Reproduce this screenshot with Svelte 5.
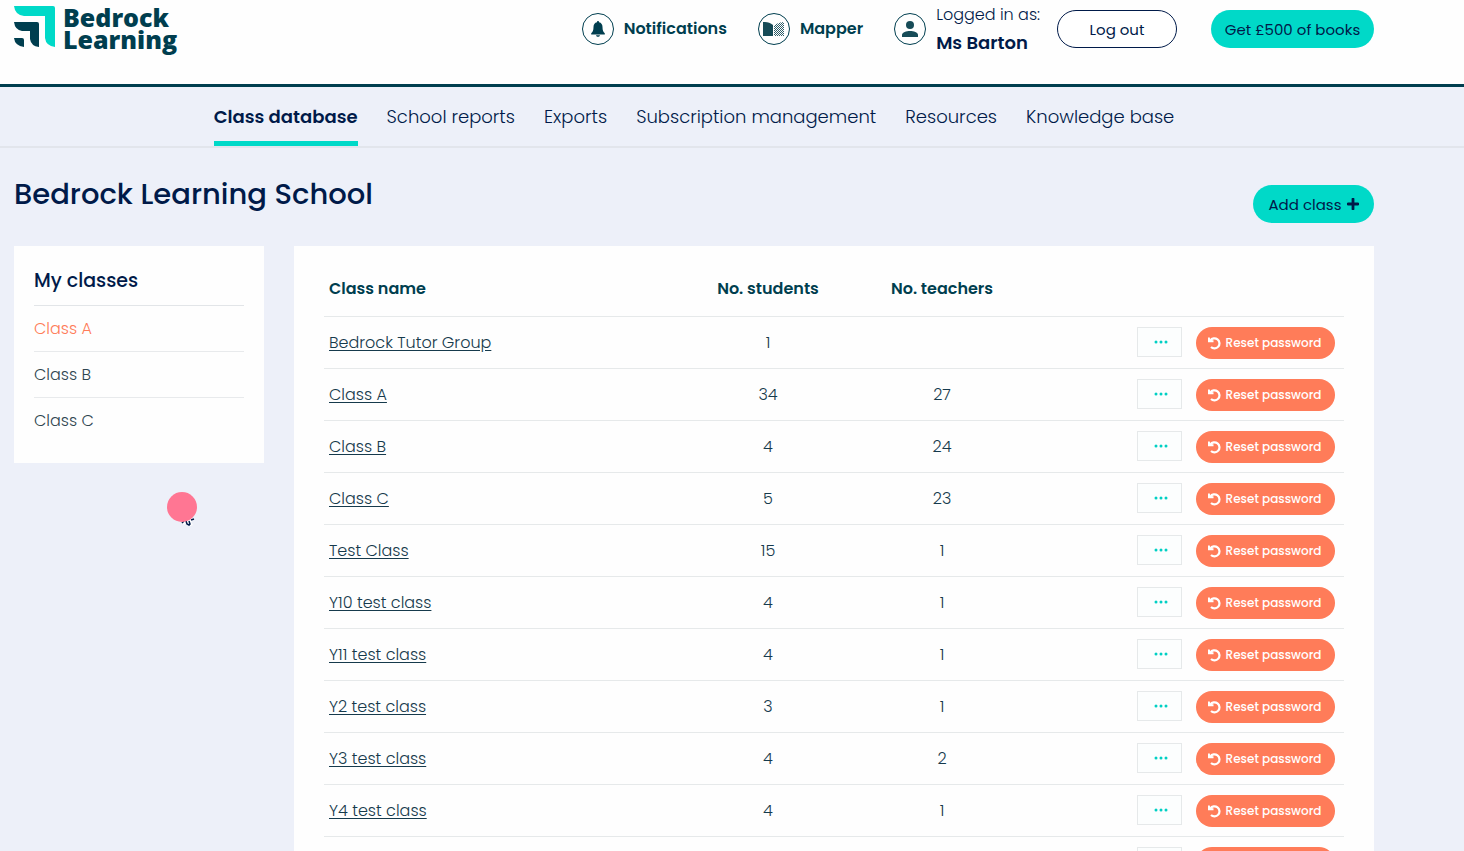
<script lang="ts">
    interface SchoolClass {
        name: string;
        students: number;
        teachers: number | null;
    }

    const tabs = [
        "Class database",
        "School reports",
        "Exports",
        "Subscription management",
        "Resources",
        "Knowledge base",
    ];

    const myClasses = ["Class A", "Class B", "Class C"];

    const classes: SchoolClass[] = [
        { name: "Bedrock Tutor Group", students: 1, teachers: null },
        { name: "Class A", students: 34, teachers: 27 },
        { name: "Class B", students: 4, teachers: 24 },
        { name: "Class C", students: 5, teachers: 23 },
        { name: "Test Class", students: 15, teachers: 1 },
        { name: "Y10 test class", students: 4, teachers: 1 },
        { name: "Y11 test class", students: 4, teachers: 1 },
        { name: "Y2 test class", students: 3, teachers: 1 },
        { name: "Y3 test class", students: 4, teachers: 2 },
        { name: "Y4 test class", students: 4, teachers: 1 },
        { name: "Y5 test class", students: 4, teachers: 1 },
    ];

    let activeTab = $state("Class database");
    let activeClass = $state("Class A");
</script>

<div class="page">
    <header class="topbar">
        <a class="logo" href="#home" aria-label="Bedrock Learning">
            <svg width="42" height="42" viewBox="0 0 42 42" aria-hidden="true">
                <path d="M0 0h39q2 0 2 2v39q-9-1-10-9V10H10Q1 9 0 0z" fill="#00d9c8" />
                <path d="M0 16h23q2 0 2 2v23q-8-1-9-8v-8H8q-7-1-8-9z" fill="#003e4f" />
                <path d="M0 32h8q2 0 2 2v7Q1 40 0 32z" fill="#003e4f" />
            </svg>
            <span class="logo-text">Bedrock<br />Learning</span>
        </a>

        <div class="account">
            <a class="top-link" href="#notifications">
                <span class="circle">
                    <svg width="14" height="16" viewBox="0 0 14 16" aria-hidden="true">
                        <path
                            d="M7 0c.7 0 1 .5 1 1.200C10.400 1.700 11.500 3.500 11.500 6c0 3.500.8 4.800 2.300 6.200v1.300H.2v-1.300C1.700 10.800 2.500 9.500 2.500 6c0-2.500 1.100-4.300 3.500-4.800C6 .5 6.300 0 7 0zM5 14.300h4c-.3 1-1 1.500-2 1.500s-1.700-.5-2-1.500z"
                            fill="#003e4f"
                        />
                    </svg>
                </span>
                Notifications
            </a>

            <a class="top-link" href="#mapper">
                <span class="circle">
                    <svg width="22" height="16" viewBox="0 0 22 16" aria-hidden="true">
                        <defs>
                            <pattern id="hatch" width="2" height="2" patternUnits="userSpaceOnUse">
                                <path d="M-.5-.5l3 3M-.5 1.500l1 1M1.500-.5l1 1" stroke="#164b57" stroke-width=".9" />
                            </pattern>
                        </defs>
                        <path d="M0 1c4-.5 7 .5 10 3v11H0z" fill="#164b57" />
                        <path d="M11 5c3-3 6-4 10-4v14H11z" fill="url(#hatch)" />
                    </svg>
                </span>
                Mapper
            </a>

            <div class="user">
                <span class="circle">
                    <svg width="16" height="16" viewBox="0 0 16 16" aria-hidden="true">
                        <circle cx="8" cy="4" r="4" fill="#164b57" />
                        <path d="M0 16v-2c0-2.700 4.500-4 8-4s8 1.300 8 4v2z" fill="#164b57" />
                    </svg>
                </span>
                <div class="user-text">
                    <span>Logged in as:</span>
                    <strong>Ms Barton</strong>
                </div>
            </div>

            <button class="pill logout" type="button">Log out</button>
            <button class="pill books" type="button">Get £500 of books</button>
        </div>
    </header>

    <nav class="tabs">
        {#each tabs as tab}
            <a
                href="#{tab.toLowerCase().replaceAll(' ', '-')}"
                class:active={tab === activeTab}
                onclick={() => (activeTab = tab)}>{tab}</a
            >
        {/each}
    </nav>

    <main>
        <div class="title-row">
            <h1>Bedrock Learning School</h1>
            <button class="pill add" type="button">
                Add class
                <svg width="12" height="12" viewBox="0 0 12 12" aria-hidden="true">
                    <path d="M6 1v10M1 6h10" stroke="#001a49" stroke-width="2.800" stroke-linecap="round" />
                </svg>
            </button>
        </div>

        <div class="columns">
            <aside class="panel side">
                <h2>My classes</h2>
                <ul>
                    {#each myClasses as name}
                        <li>
                            <a
                                href="#{name.toLowerCase().replace(' ', '-')}"
                                class:active={name === activeClass}
                                onclick={() => (activeClass = name)}>{name}</a
                            >
                        </li>
                    {/each}
                </ul>
            </aside>

            <section class="panel list">
                <table>
                    <thead>
                        <tr>
                            <th class="name">Class name</th>
                            <th class="count">No. students</th>
                            <th class="count">No. teachers</th>
                            <th class="actions-col" aria-label="Actions"></th>
                        </tr>
                    </thead>
                    <tbody>
                        {#each classes as item}
                            <tr>
                                <td class="name"><a href="#class">{item.name}</a></td>
                                <td class="count">{item.students}</td>
                                <td class="count">{item.teachers ?? ""}</td>
                                <td>
                                    <div class="actions">
                                        <button class="more" type="button" aria-label="More options">
                                            <svg width="14" height="4" viewBox="0 0 14 4" aria-hidden="true">
                                                <circle cx="2" cy="2" r="1.500" />
                                                <circle cx="7" cy="2" r="1.500" />
                                                <circle cx="12" cy="2" r="1.500" />
                                            </svg>
                                        </button>
                                        <button class="reset" type="button">
                                            <svg width="13" height="13" viewBox="0 0 13 13" aria-hidden="true">
                                                <path
                                                    d="M2.300 3.600A5 5 0 1 1 3 10"
                                                    fill="none"
                                                    stroke="#fff"
                                                    stroke-width="2.200"
                                                />
                                                <path d="M0 .4h1.800l.4 2.600 3.300.2v2H0z" fill="#fff" />
                                            </svg>
                                            Reset password
                                        </button>
                                    </div>
                                </td>
                            </tr>
                        {/each}
                    </tbody>
                </table>
            </section>
        </div>
    </main>

    <!-- click highlight with the pointer tip under it -->
    <div class="pointer" aria-hidden="true">
        <svg width="30" height="36" viewBox="0 0 30 36">
            <path d="M15 30l3-3 6 0 3 0-3 3 2 3-3 1-3-4-3 3z" fill="#fff" />
            <path
                d="M15 31l2-2M19 29l1 3 2 1 1-1-1-3M24 28l3-1"
                fill="none"
                stroke="#001a49"
                stroke-width="1.500"
            />
            <circle cx="15" cy="15" r="15" fill="#ff7693" />
        </svg>
    </div>
</div>

<style>
    :global(body) {
        margin: 0;
        background: #edf0f9;
    }

    .page {
        position: relative;
        height: 100vh;
        overflow: hidden;
        background: #edf0f9;
        color: #001a49;
        font-family: Poppins, Inter, "Open Sans", sans-serif;
        font-size: 16px;
        font-weight: 300;
        line-height: 24px;
    }

    a {
        color: inherit;
        text-decoration: none;
    }

    button {
        font-family: inherit;
        color: inherit;
        cursor: pointer;
    }

    .topbar {
        display: flex;
        justify-content: space-between;
        align-items: flex-start;
        box-sizing: border-box;
        height: 87px;
        padding: 0 90px 0 14px;
        background: #fefefe;
        border-bottom: 3px solid #003e4f;
    }

    .logo {
        display: flex;
        gap: 7px;
        padding-top: 6px;
        color: #003e4f;
    }

    .logo-text {
        font-family: "Open Sans", "Noto Sans", sans-serif;
        font-size: 25px;
        font-weight: 800;
        line-height: 22px;
    }

    .account {
        display: flex;
        align-items: center;
        height: 58px;
    }

    .top-link {
        display: flex;
        align-items: center;
        gap: 10px;
        margin-right: 31px;
        color: #003e4f;
        font-weight: 600;
    }

    .circle {
        display: flex;
        align-items: center;
        justify-content: center;
        box-sizing: border-box;
        width: 32px;
        height: 32px;
        border: 1px solid #003e4f;
        border-radius: 50%;
    }

    .user {
        display: flex;
        align-items: center;
        gap: 10px;
        margin-right: 17px;
    }

    .user-text {
        display: flex;
        flex-direction: column;
        line-height: 28px;
    }

    .user-text strong {
        font-size: 18px;
        font-weight: 600;
    }

    .pill {
        display: flex;
        align-items: center;
        justify-content: center;
        gap: 5px;
        height: 38px;
        padding: 0 16px;
        border: 0;
        border-radius: 19px;
        background: #00d9c8;
        font-size: 15px;
        font-weight: 400;
    }

    .logout {
        width: 120px;
        margin-right: 34px;
        border: 1px solid #001a49;
        background: #fff;
    }

    .books {
        width: 163px;
        padding: 0;
    }

    .add {
        width: 121px;
        padding: 0;
    }

    .tabs {
        display: flex;
        justify-content: center;
        gap: 29px;
        padding: 0 90px 0 14px;
        border-bottom: 2px solid #e2e5ec;
        font-size: 18px;
    }

    .tabs a {
        padding: 18px 0 12px;
        border-bottom: 5px solid transparent;
    }

    .tabs a.active {
        border-bottom-color: #00d9c8;
        font-weight: 600;
    }

    main {
        padding: 25px 90px 0 14px;
    }

    .title-row {
        display: flex;
        justify-content: space-between;
        align-items: flex-start;
        height: 73px;
    }

    h1 {
        margin: 0;
        font-size: 29px;
        font-weight: 500;
        line-height: 42px;
    }

    .title-row .pill {
        margin-top: 12px;
    }

    .columns {
        display: grid;
        grid-template-columns: 250px 1fr;
        gap: 30px;
        align-items: start;
    }

    .panel {
        background: #fefefe;
    }

    .side {
        padding: 20px;
    }

    h2 {
        margin: 0;
        padding: 3px 0 12px;
        font-size: 19px;
        font-weight: 500;
        border-bottom: 1px solid #e2e5e8;
    }

    ul {
        margin: 0;
        padding: 0;
        list-style: none;
    }

    li {
        padding: 11px 0 10px;
        border-bottom: 1px solid #e8eaec;
        color: #2f4550;
    }

    li:last-child {
        border-bottom: 0;
    }

    li a.active {
        color: #ff7c59;
    }

    .list {
        padding: 15px 30px;
    }

    table {
        width: 100%;
        table-layout: fixed;
        border-collapse: collapse;
        color: #163a4c;
    }

    th,
    td {
        box-sizing: border-box;
        height: 52px;
        padding: 2px 5px 0;
        border-bottom: 1px solid #e6e9ea;
        text-align: center;
    }

    th {
        height: 55px;
        color: #003e4f;
        font-weight: 600;
    }

    th.name {
        width: 35%;
    }

    th.count {
        width: 174px;
    }

    .name {
        text-align: left;
    }

    td.name a {
        text-decoration: underline;
        text-underline-offset: 2px;
    }

    .actions {
        display: flex;
        justify-content: flex-end;
        align-items: flex-start;
        gap: 14px;
        padding-right: 4px;
    }

    .more {
        display: flex;
        align-items: center;
        justify-content: center;
        width: 45px;
        height: 30px;
        padding: 0 0 0 3px;
        border: 1px solid #e6e9ea;
        background: #fcfefe;
    }

    .more svg {
        fill: #00d0c4;
    }

    .reset {
        display: flex;
        align-items: center;
        justify-content: center;
        gap: 5px;
        width: 139px;
        height: 32px;
        padding: 0 2px 0 0;
        border: 0;
        border-radius: 16px;
        background: #ff7c59;
        color: #fff;
        font-size: 12px;
        font-weight: 500;
    }

    .pointer {
        position: absolute;
        top: 492px;
        left: 167px;
    }
</style>
